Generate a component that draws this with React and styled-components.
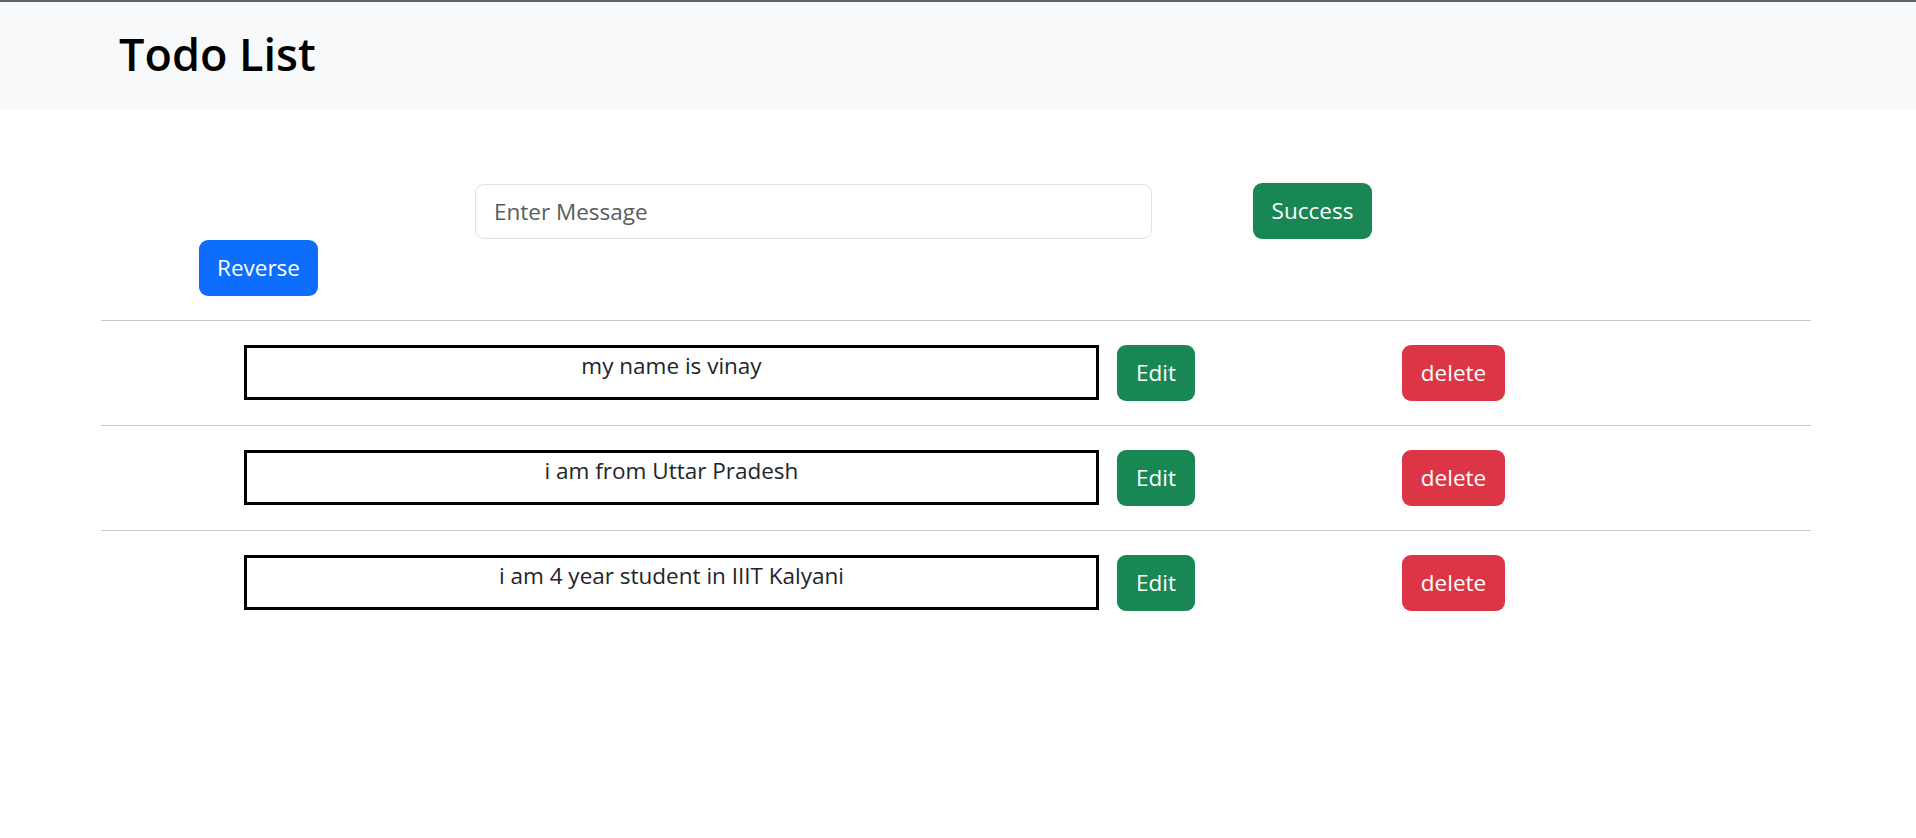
import React from "react";
import styled, { createGlobalStyle } from "styled-components";

const GlobalStyle = createGlobalStyle`
  body {
    margin: 0;
    background: #fff;
    font-family: "Open Sans", "Noto Sans", sans-serif;
    color: #212529;
  }
  * {
    box-sizing: border-box;
  }
`;

const Header = styled.header`
  border-top: 2px solid #606368;
  background: #f8f9fa;
  height: 110px;
  padding: 24px 0 0 119px;
`;

const Title = styled.h1`
  margin: 0;
  font-size: 45px;
  font-weight: 600;
  line-height: 55px;
  color: #000;
`;

const Main = styled.main`
  margin-left: 101px;
  width: 1710px;
`;

const Form = styled.div`
  padding: 73px 0 24px;
`;

const InputRow = styled.div`
  display: flex;
  align-items: center;
  padding-left: 374px;
`;

const MessageInput = styled.input`
  width: 677px;
  height: 55px;
  padding: 0 18px;
  border: 1px solid #dee2e6;
  border-radius: 9px;
  font-family: inherit;
  font-size: 22.5px;
  color: #212529;
  outline: none;
  &::placeholder {
    color: #595c5f;
  }
`;

const Button = styled.button`
  width: ${(p) => p.$width}px;
  height: 56px;
  margin-left: ${(p) => p.$offset || 0}px;
  padding: 0;
  border: none;
  border-radius: 9px;
  background: ${(p) => p.$bg};
  color: #fff;
  font-family: inherit;
  font-size: 22.5px;
  line-height: 36px;
  cursor: pointer;
`;

const ReverseRow = styled.div`
  margin-top: 1px;
  padding-left: 98px;
`;

const Divider = styled.hr`
  margin: 0;
  border: none;
  border-top: 1px solid #c8c8c8;
`;

const ItemRow = styled.div`
  display: flex;
  align-items: flex-start;
  padding: 24px 0 24px 143px;
`;

const ItemBox = styled.div`
  width: 855px;
  height: 55px;
  border: 3px solid #000;
  text-align: center;
  font-size: 22.5px;
  line-height: 36px;
  color: #212529;
`;

const green = "#198754";
const blue = "#0d6efd";
const red = "#dc3545";

const todos = [
  "my name is vinay",
  "i am from Uttar Pradesh",
  "i am 4 year student in IIIT Kalyani",
];

const App = () => {
  return (
    <>
      <GlobalStyle />
      <Header>
        <Title>Todo List</Title>
      </Header>
      <Main>
        <Form>
          <InputRow>
            <MessageInput placeholder="Enter Message" />
            <Button $bg={green} $width={119} $offset={101}>
              Success
            </Button>
          </InputRow>
          <ReverseRow>
            <Button $bg={blue} $width={119}>
              Reverse
            </Button>
          </ReverseRow>
        </Form>
        {todos.map((t) => (
          <React.Fragment key={t}>
            <Divider />
            <ItemRow>
              <ItemBox>{t}</ItemBox>
              <Button $bg={green} $width={78} $offset={18}>
                Edit
              </Button>
              <Button $bg={red} $width={103} $offset={207}>
                delete
              </Button>
            </ItemRow>
          </React.Fragment>
        ))}
      </Main>
    </>
  );
};

export default App;
